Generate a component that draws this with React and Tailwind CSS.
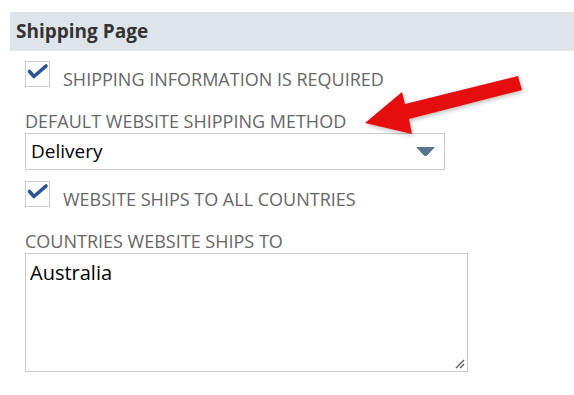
import React from 'react';

const Check = () => (
    <div className="relative w-[25px] h-[26px] border border-[#cccccc] bg-white shrink-0">
        <svg className="absolute left-0 top-0" width="23" height="24" viewBox="0 0 23 24">
            <path d="M3.5 9.5 L8 14.5 L20 4" fill="none" stroke="#2b5494" strokeWidth="3.6" strokeLinecap="round" strokeLinejoin="round" />
        </svg>
    </div>
);

const App = () => {
    return (
        <div className="relative w-[574px] h-[395px] bg-white overflow-hidden" style={{ fontFamily: "'Open Sans', sans-serif" }}>
            {/* Header */}
            <div className="mt-[12px] ml-[10px] h-[39px] bg-[#dfe4eb] pl-[6px] flex items-center">
                <h2 className="text-[19px] font-bold text-[#333333]">Shipping Page</h2>
            </div>

            <div className="pl-[25px]">
                <div className="mt-[10px] flex items-start gap-[13px]">
                    <Check />
                    <span className="text-[18px] text-[#666666] leading-[24px] mt-[6px]">SHIPPING INFORMATION IS REQUIRED</span>
                </div>

                <div className="mt-[18px] text-[18px] text-[#666666] leading-[24px]">DEFAULT WEBSITE SHIPPING METHOD</div>

                <div className="w-[420px] h-[37px] border border-[#cccccc] flex items-center justify-between pl-[5px] pr-[9px]">
                    <span className="text-[19px] text-black">Delivery</span>
                    <svg width="19" height="11" viewBox="0 0 19 11">
                        <path d="M1 1.5 H18 L10.5 9.5 H8.5 Z" fill="#5a7291" stroke="#5a7291" strokeWidth="1" strokeLinejoin="round" />
                    </svg>
                </div>

                <div className="mt-[11px] flex items-start gap-[13px]">
                    <Check />
                    <span className="text-[18px] text-[#666666] leading-[24px] mt-[6px]">WEBSITE SHIPS TO ALL COUNTRIES</span>
                </div>

                <div className="mt-[18px] text-[18px] text-[#666666] leading-[24px]">COUNTRIES WEBSITE SHIPS TO</div>

                <div className="relative w-[443px] h-[119px] border border-[#cccccc] pl-[4px] pt-[5px]">
                    <span className="text-[20px] leading-[27px] text-black">Australia</span>
                    <svg className="absolute right-[2px] bottom-[2px]" width="10" height="10" viewBox="0 0 10 10">
                        <path d="M1 9 L9 1 M5 9 L9 5" stroke="#555" strokeWidth="1.2" />
                    </svg>
                </div>
            </div>

            {/* Red arrow */}
            <svg className="absolute left-0 top-0 pointer-events-none" width="574" height="395" viewBox="0 0 574 395">
                <defs>
                    <filter id="sh" x="-20%" y="-20%" width="140%" height="140%">
                        <feDropShadow dx="1" dy="2" stdDeviation="2" floodColor="#000" floodOpacity="0.25" />
                    </filter>
                </defs>
                <path d="M365 123 L402 92 L405 104 L518 76 L522 90 L409 119 L412 134 Z" fill="#e50c0c" filter="url(#sh)" />
            </svg>
        </div>
    );
};

export default App;
